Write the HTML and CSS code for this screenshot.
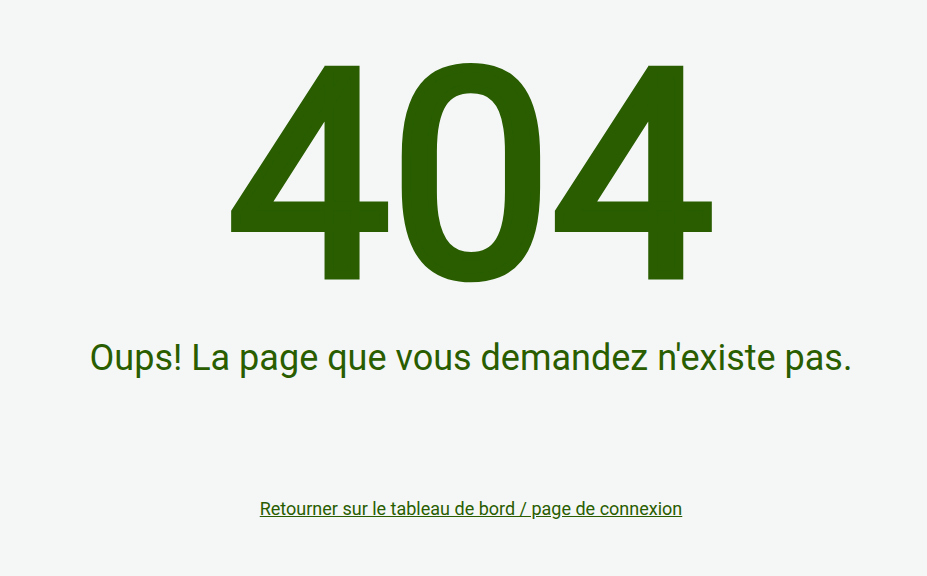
FILE: index.html
```html
<!DOCTYPE html>
<html lang="fr">
<head>
<meta charset="utf-8">
<meta name="viewport" content="width=device-width, initial-scale=1">
<title>404</title>
<link rel="stylesheet" href="styles.css">
</head>
<body>
<main class="error-page">
  <h1 class="error-code">404</h1>
  <p class="error-message">Oups! La page que vous demandez n'existe pas.</p>
  <a class="error-link" href="#">Retourner sur le tableau de bord / page de connexion</a>
</main>
</body>
</html>
```
FILE: styles.css
```css
body {
  margin: 0;
  background: #f5f7f7;
  color: #295d00;
  font-family: Roboto, sans-serif;
}

.error-page {
  display: flex;
  flex-direction: column;
  align-items: center;
  padding: 27px 0 0 15px;
  text-align: center;
}

/* Regular weight thickened by an outline in the text colour */
.error-code {
  margin: 0;
  font-size: 288px;
  font-weight: 400;
  line-height: 300px;
  -webkit-text-stroke: 9px currentColor;
}

.error-message {
  margin: 11px 0 0;
  font-size: 36px;
  line-height: 40px;
}

.error-link {
  margin-top: 119px;
  color: inherit;
  font-size: 18px;
  line-height: 24px;
}
```
